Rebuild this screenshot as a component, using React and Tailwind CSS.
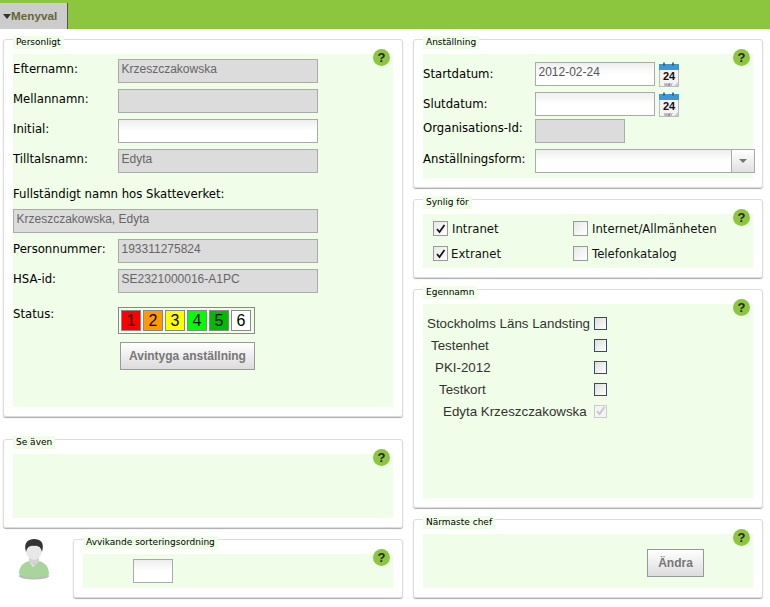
import { useState } from 'react'

const verdana = "font-['DejaVu_Sans',sans-serif]"
const arial = "font-['Liberation_Sans',Arial,sans-serif]"

const Help = () => (
  <span className={`absolute right-[3px] top-[-5px] flex h-[17px] w-[17px] items-center justify-center rounded-full bg-[#8cc63f] text-[13px] font-bold leading-none text-[#222] ${arial}`}>
    ?
  </span>
)

const Panel = ({ title, height, children }) => (
  <div className={`relative rounded-[3px] border border-[#dcdcdc] px-[9px] pt-[14px] pb-[9px] shadow-[0_1px_1px_#aaa] ${height}`}>
    <span className={`absolute left-[9px] top-[-4px] bg-[#f0fde9] px-[3px] text-[9px] leading-[13px] text-black ${verdana}`}>
      {title}
    </span>
    <div className="relative h-full bg-[#f0fde9]">
      <Help />
      {children}
    </div>
  </div>
)

const Field = ({ value = '', disabled, width }) => (
  <div
    className={`h-[24px] shrink-0 border border-[#aaa] px-[2.5px] text-[12px] leading-[19px] ${arial} ${width} ${
      disabled
        ? 'bg-[#dcdcdc] text-[#666]'
        : 'bg-gradient-to-b from-[#eeeeee] via-white to-white text-[#555]'
    }`}
  >
    {value}
  </div>
)

const Row = ({ label, labelWidth = 'w-[105px]', leading = 'leading-[20px]', children }) => (
  <div className="flex h-[24px]">
    <span className={`shrink-0 text-[11.7px] text-black ${verdana} ${labelWidth} ${leading}`}>{label}</span>
    {children}
  </div>
)

const Calendar = () => (
  <svg width="20" height="25" viewBox="0 0 20 25" className="ml-[4px] shrink-0">
    <rect x="0.5" y="2.5" width="19" height="22" fill="#f4f4f4" stroke="#bbb" />
    <rect x="0" y="2" width="20" height="6" fill="#3a97d8" />
    <path d="M5 3.5V0.5M14 3.5V0.5" stroke="#444" strokeWidth="1.5" />
    <text x="10" y="17.5" textAnchor="middle" fontSize="11" fontWeight="bold" fontFamily="Liberation Sans" fill="#111">24</text>
    <text x="9.5" y="23.6" textAnchor="middle" fontSize="4" fontFamily="Liberation Sans" fill="#555">MAY</text>
    <path d="M19 20L15 24H19Z" fill="#ccc" />
  </svg>
)

const Box = ({ checked, className = 'h-[15px] w-[15px] border-[#999] bg-gradient-to-br from-[#e8e8e8] to-white', mark = '#111' }) => (
  <span className={`flex shrink-0 items-center justify-center border ${className}`}>
    {checked && (
      <svg width="11" height="10" viewBox="0 0 11 10">
        <path d="M2 5L4.5 8L9.5 1" fill="none" stroke={mark} strokeWidth="1.7" />
      </svg>
    )}
  </span>
)

const Check = ({ label, checked, gap = 'ml-[4px]' }) => (
  <div className="flex h-[15px] items-center">
    <Box checked={checked} />
    <span className={`pt-[2px] text-[11.7px] text-[#111] ${verdana} ${gap}`}>{label}</span>
  </div>
)

const statusColors = [
  ['1', 'bg-[#ff0000]'],
  ['2', 'bg-[#ff9900]'],
  ['3', 'bg-[#ffff00]'],
  ['4', 'bg-[#00ff00]'],
  ['5', 'bg-[#00bb00]'],
  ['6', 'bg-white'],
]

const names = [
  ['Stockholms Läns Landsting', 'pl-[4px]'],
  ['Testenhet', 'pl-[8px]'],
  ['PKI-2012', 'pl-[12px]'],
  ['Testkort', 'pl-[16px]'],
  ['Edyta Krzeszczakowska', 'pl-[20px]'],
]

const Button = ({ children, className }) => (
  <div className={`flex h-[28px] items-center justify-center border border-[#999] bg-gradient-to-b from-white to-[#dcdcdc] text-[12px] font-bold text-[#777] ${arial} ${className}`}>
    {children}
  </div>
)

const Avatar = () => (
  <svg width="32" height="41" viewBox="0 0 32 41">
    <ellipse cx="16" cy="37" rx="15" ry="3.5" fill="#b4bfb2" />
    <path d="M1 35C1 27 5 24 11 22L15 28L21 22C27 24 31 27 31 35C25 40 7 40 1 35Z" fill="#a9d59c" />
    <path d="M11 17H21V22L16 28L11 22Z" fill="#d2d2d2" />
    <ellipse cx="16" cy="11" rx="8" ry="10" fill="#e8e8e8" />
    <path d="M8 13C5 3 11 0 16 0C22 0 27 3 24 13C23 8 20 6 16 7C12 6 9 8 8 13Z" fill="#333" />
  </svg>
)

export default function App() {
  const [menu] = useState('Menyval')

  return (
    <div className="h-[607px] w-[770px] overflow-hidden bg-white">
      <div className="h-[29px] bg-[#8cc63f] pt-[3px]">
        <div className={`flex h-[26px] w-[68px] items-center border-r border-r-[#555] bg-[#cccccc] pl-[3px] text-[11.7px] font-bold text-[#666633] ${arial}`}>
          <span className="h-0 w-0 border-x-[4px] border-t-[5px] border-x-transparent border-t-[#333]" />
          {menu}
        </div>
      </div>

      <div className="flex gap-[10px] pl-[3px] pt-[10px]">
        {/* vänster kolumn */}
        <div className="flex w-[400px] flex-col gap-[11px]">
          <Panel title="Personligt" height="h-[378px] mb-[11px]">
            <div className="flex flex-col gap-[6px] pt-[5px]">
              <Row label="Efternamn:"><Field value="Krzeszczakowska" disabled width="w-[200px]" /></Row>
              <Row label="Mellannamn:"><Field disabled width="w-[200px]" /></Row>
              <Row label="Initial:"><Field width="w-[200px]" /></Row>
              <Row label="Tilltalsnamn:"><Field value="Edyta" disabled width="w-[200px]" /></Row>
            </div>
            <div className={`mt-[11px] h-[20px] text-[11.7px] leading-[20px] text-black ${verdana}`}>
              Fullständigt namn hos Skatteverket:
            </div>
            <div className="mt-[5px] flex flex-col gap-[6px]">
              <Field value="Krzeszczakowska, Edyta" disabled width="w-[305px]" />
              <Row label="Personnummer:"><Field value="193311275824" disabled width="w-[200px]" /></Row>
              <Row label="HSA-id:"><Field value="SE2321000016-A1PC" disabled width="w-[200px]" /></Row>
            </div>
            <div className="mt-[14px] flex">
              <span className={`w-[105px] text-[11.7px] leading-[14px] text-black ${verdana}`}>Status:</span>
              <div className="flex flex-col">
                <div className="flex gap-[2px] border border-[#888] p-[2px]">
                  {statusColors.map(([n, bg]) => (
                    <span key={n} className={`flex h-[21px] w-[20px] items-center justify-center border border-[#888] text-[16px] text-black ${arial} ${bg}`}>
                      {n}
                    </span>
                  ))}
                </div>
                <Button className="ml-[2px] mt-[8px] w-[135px]">Avintyga anställning</Button>
              </div>
            </div>
          </Panel>

          <Panel title="Se även" height="h-[89px]" />

          <div className="flex">
            <div className="w-[70px] pl-[15px]">
              <Avatar />
            </div>
            <div className="flex-1">
              <Panel title="Avvikande sorteringsordning" height="h-[59px]">
                <div className="pl-[50px] pt-[5px]">
                  <Field width="w-[40px]" />
                </div>
              </Panel>
            </div>
          </div>
        </div>

        {/* höger kolumn */}
        <div className="flex w-[350px] flex-col gap-[11px]">
          <Panel title="Anställning" height="h-[149px]">
            <div className="flex flex-col pt-[8px]">
              <Row label="Startdatum:" labelWidth="w-[112px]" leading="leading-[24px]">
                <Field value="2012-02-24" width="w-[120px]" />
                <Calendar />
              </Row>
              <div className="mt-[6px]">
                <Row label="Slutdatum:" labelWidth="w-[112px]" leading="leading-[24px]">
                  <Field width="w-[120px]" />
                  <Calendar />
                </Row>
              </div>
              <div className="mt-[3px]">
                <Row label="Organisations-Id:" labelWidth="w-[112px]" leading="leading-[18px]">
                  <Field disabled width="w-[90px]" />
                </Row>
              </div>
              <div className="mt-[6px]">
                <Row label="Anställningsform:" labelWidth="w-[112px]">
                  <div className="flex h-[24px] w-[220px] shrink-0 border border-[#aaa] bg-gradient-to-b from-[#eeeeee] via-white to-white">
                    <div className="flex-1" />
                    <div className="flex w-[23px] items-center justify-center border-l border-[#aaa] bg-gradient-to-b from-white to-[#e0e0e0]">
                      <span className="h-0 w-0 border-x-[4px] border-t-[4px] border-x-transparent border-t-[#777]" />
                    </div>
                  </div>
                </Row>
              </div>
            </div>
          </Panel>

          <Panel title="Synlig för" height="h-[79px]">
            <div className="grid grid-cols-[140px_1fr] gap-y-[10px] pl-[10px] pt-[7px]">
              <Check label="Intranet" checked />
              <Check label="Internet/Allmänheten" />
              <Check label="Extranet" checked gap="ml-[3px]" />
              <Check label="Telefonkatalog" />
            </div>
          </Panel>

          <Panel title="Egennamn" height="h-[219px]">
            <div className="flex flex-col gap-[6px] pt-[11px]">
              {names.map(([name, indent], i) => (
                <div key={name} className="flex h-[16px] items-center">
                  <span className={`w-[171px] shrink-0 whitespace-nowrap pt-[2px] text-[13.33px] text-[#333] ${arial} ${indent}`}>{name}</span>
                  <Box
                    checked={i === 4}
                    mark="#c4c4c4"
                    className={
                      i === 4
                        ? 'h-[13px] w-[13px] border-[#ccc] bg-[#f4f4f4]'
                        : 'h-[13px] w-[13px] border-[#2b4f76] bg-gradient-to-br from-[#dddddd] to-white'
                    }
                  />
                </div>
              ))}
            </div>
          </Panel>

          <Panel title="Närmaste chef" height="h-[79px]">
            <div className="flex justify-end pr-[49px] pt-[15px]">
              <Button className="w-[57px]">Ändra</Button>
            </div>
          </Panel>
        </div>
      </div>
    </div>
  )
}
